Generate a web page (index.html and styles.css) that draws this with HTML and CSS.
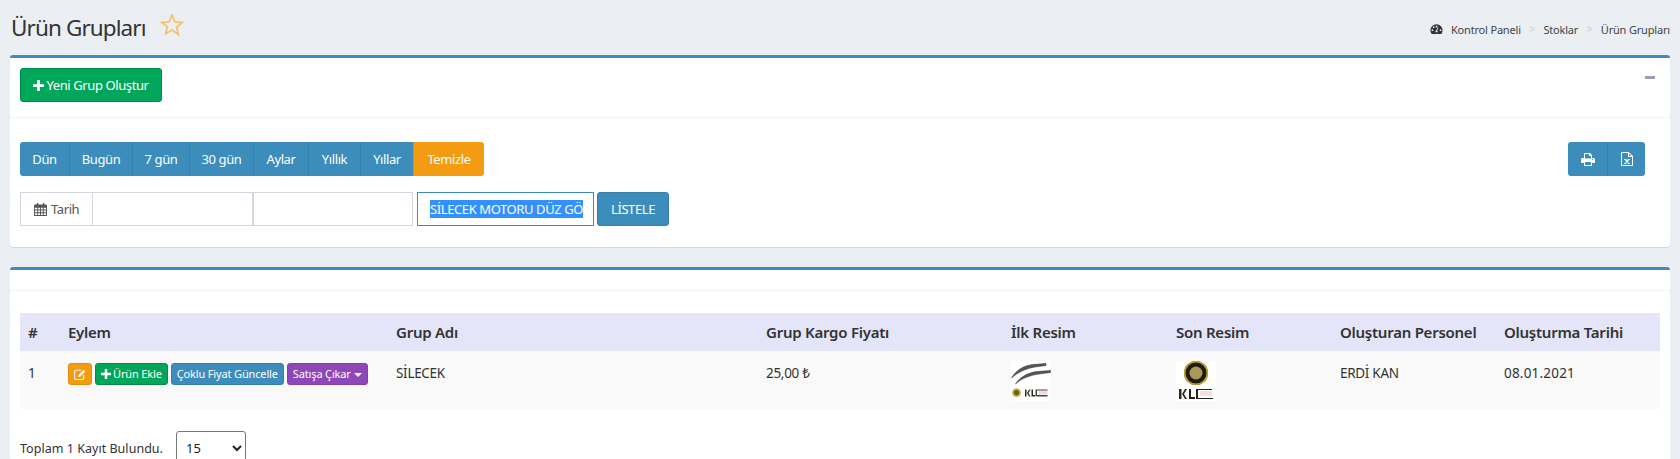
FILE: index.html
```html
<!DOCTYPE html>
<html lang="tr">
<head>
<meta charset="utf-8">
<title>Ürün Grupları</title>
<link rel="stylesheet" href="styles.css">
</head>
<body>
<header class="page-head">
  <h1>Ürün Grupları</h1>
  <svg class="star" viewBox="0 0 24 24"><path d="M12 2.200l2.900 6.600 7.200.7-5.400 4.800 1.600 7.100L12 17l-6.300 3.700 1.600-7.100L1.900 9.500l7.200-.7z"/></svg>
  <nav class="crumbs">
    <svg class="ico-gauge" viewBox="0 0 16 14"><path fill-rule="evenodd" d="M8 1a7.500 7.500 0 0 0-7.500 7.500c0 1.500.4 2.900 1.200 4.100.1.200.3.400.6.400h11.400c.3 0 .5-.2.600-.4.800-1.200 1.200-2.600 1.200-4.100A7.500 7.500 0 0 0 8 1zM3 9.500a1.100 1.100 0 1 1 0-2.200 1.100 1.100 0 0 1 0 2.200zm1.500-3.600a1.100 1.100 0 1 1 0-2.200 1.100 1.100 0 0 1 0 2.200zM8 5a1.100 1.100 0 1 1 0-2.200A1.100 1.100 0 0 1 8 5zm1.300 6H6.700c-.3-1.300.4-2 1-2.300l1.700-4 1 .4-1.600 4c.5.400.8 1.100.5 1.900zm3.700-1.500a1.100 1.100 0 1 1 0-2.200 1.100 1.100 0 0 1 0 2.200z"/></svg>
    <span class="crumb first">Kontrol Paneli</span><span class="sep">&gt;</span><span class="crumb">Stoklar</span><span class="sep">&gt;</span><span class="crumb">Ürün Grupları</span>
  </nav>
</header>

<section class="box box-filter">
  <div class="box-head">
    <button class="btn btn-green btn-new"><svg class="ico-plus" viewBox="0 0 12 12"><path d="M4.500 0h3v4.500H12v3H7.500V12h-3V7.500H0v-3h4.500z"/></svg>Yeni Grup Oluştur</button>
    <span class="collapse"></span>
  </div>
  <div class="box-body">
    <div class="toolbar">
      <div class="btn-group periods">
        <button class="seg">Dün</button><button class="seg">Bugün</button><button class="seg">7 gün</button><button class="seg">30 gün</button><button class="seg">Aylar</button><button class="seg">Yıllık</button><button class="seg">Yıllar</button><button class="seg seg-clear">Temizle</button>
      </div>
      <div class="btn-group export">
        <button class="seg seg-icon"><svg class="ico-print" viewBox="0 0 14 13"><path fill-rule="evenodd" d="M3 0h6l2 2v3h1.500c.8 0 1.500.7 1.500 1.500V10h-3v3H3v-3H0V6.500C0 5.700.7 5 1.500 5H3zm1 1v4.500h6V3H8.500C8.200 3 8 2.800 8 2.500V1zM4 9v3h6V9zm7.500-3a.6.600 0 1 0 0 1.200.6.600 0 0 0 0-1.200z"/></svg></button><button class="seg seg-icon"><svg class="ico-xls" viewBox="0 0 12 14"><path fill-rule="evenodd" d="M1 0h6.500L12 4v9c0 .6-.4 1-1 1H1c-.6 0-1-.4-1-1V1c0-.6.4-1 1-1zm0 1v12h10V5H7V1zm7 .4V4h2.300zM3 7h2.200l.8 1.400L6.800 7H9v.8h-.8L6.900 9.700l1.300 1.500H9v.8H6.700v-.8h.4L6 9.900l-1.100 1.300h.4v.8H3v-.8h.8l1.300-1.500-1.300-1.900H3z"/></svg></button>
      </div>
    </div>
    <div class="filter-row">
      <span class="addon"><svg class="ico-cal" viewBox="0 0 14 14"><path fill-rule="evenodd" d="M3 0h1.500v1.500h5V0H11v1.500h1.700c.7 0 1.300.6 1.300 1.300V14H0V2.800c0-.7.600-1.300 1.300-1.300H3zM1 5v2h2.500V5zm3.500 0v2h2V5zm3 0v2h2V5zm3 0v2H13V5zM1 8v2h2.500V8zm3.500 0v2h2V8zm3 0v2h2V8zm3 0v2H13V8zM1 11v2h2.500v-2zm3.500 0v2h2v-2zm3 0v2h2v-2zm3 0v2H13v-2z"/></svg>Tarih</span>
      <span class="date-input"></span>
      <span class="date-input"></span>
      <span class="search-input"><span class="selected">SİLECEK MOTORU DÜZ GÖ</span></span>
      <button class="btn btn-blue btn-list">LİSTELE</button>
    </div>
  </div>
</section>

<section class="box box-table">
  <div class="box-head-empty"></div>
  <div class="box-body-table">
    <table>
      <colgroup>
        <col class="c1"><col class="c2"><col class="c3"><col class="c4"><col class="c5"><col class="c6"><col class="c7"><col class="c8">
      </colgroup>
      <thead>
        <tr><th>#</th><th>Eylem</th><th>Grup Adı</th><th>Grup Kargo Fiyatı</th><th>İlk Resim</th><th>Son Resim</th><th>Oluşturan Personel</th><th>Oluşturma Tarihi</th></tr>
      </thead>
      <tbody>
        <tr>
          <td>1</td>
          <td class="actions">
            <button class="mini btn-orange"><svg class="ico-edit" viewBox="0 0 14 13"><path fill-rule="evenodd" d="M2.300 1H9l-1.200 1.200H2.300c-.6 0-1.100.5-1.100 1.100v7.400c0 .6.500 1.100 1.100 1.100h7.400c.6 0 1.100-.5 1.100-1.100V7.500L12 6.300v4.400c0 1.300-1 2.300-2.300 2.300H2.300C1 13 0 12 0 10.700V3.300C0 2 1 1 2.300 1zM11.400 1l1.900 1.900L7.500 8.800l-2.400.6.500-2.500z"/></svg></button>
            <button class="mini btn-green"><svg class="ico-plus small" viewBox="0 0 12 12"><path d="M4.500 0h3v4.500H12v3H7.500V12h-3V7.500H0v-3h4.500z"/></svg>Ürün Ekle</button>
            <button class="mini btn-blue">Çoklu Fiyat Güncelle</button>
            <button class="mini btn-purple">Satışa Çıkar<i class="caret"></i></button>
          </td>
          <td>SİLECEK</td>
          <td>25,00 ₺</td>
          <td class="thumb-cell">
            <svg class="thumb" viewBox="0 0 40 40">
              <rect width="40" height="40" fill="#fff"/>
              <path d="M.5 17C5 9 13 4.500 22 3.500L35 2.500V4.500L24 6C15 7.500 7 11 .5 17z" fill="#55555c" stroke="#333" stroke-width=".5"/>
              <path d="M4.500 23C9 16 17 11.500 26 10.500L39.500 9.500V11.500L28 13C19 14.500 11 17 4.500 23z" fill="#55555c" stroke="#333" stroke-width=".5"/>
              <circle cx="5.500" cy="31.700" r="3.500" fill="#6b6020" stroke="#c9b040" stroke-width="1.800"/>
              <path d="M14 28.500h1.500v7H14zM16 32l2-3.500h1.500l-2 3.500 2 3.500H18zM20.500 28.500H22v5.500h2v1.500h-3.500z" fill="#2c2a14"/>
              <path d="M24.500 28.500h12v1H26v4.500h10.500v1.500h-12z" fill="#444"/>
              <rect x="27.500" y="30" width="9" height="3.500" fill="#f3d9d9"/>
            </svg>
          </td>
          <td class="thumb-cell">
            <svg class="thumb" viewBox="0 0 40 40">
              <rect width="40" height="40" fill="#fff"/>
              <circle cx="20" cy="12" r="12" fill="#1d1b10"/>
              <circle cx="20" cy="12" r="11.300" fill="none" stroke="#c6a72a" stroke-width="1.500"/>
              <circle cx="20" cy="12" r="6.500" fill="#a8985a"/>
              <path d="M3 28h2.500v10H3zM6 33l3-5h2l-3 5 3 5H9z" fill="#2a2a1a"/>
              <path d="M13 28h2v8h4v2h-6zM20 28h16v1H22v8h15v1H20z" fill="#222"/>
              <rect x="24" y="30" width="12" height="5" fill="#f5dede"/>
            </svg>
          </td>
          <td>ERDİ KAN</td>
          <td class="date-cell">08.01.2021</td>
        </tr>
      </tbody>
    </table>
    <div class="table-foot">
      <span class="total">Toplam 1 Kayıt Bulundu.</span>
      <select class="page-size"><option>15</option></select>
    </div>
  </div>
</section>
</body>
</html>
```
FILE: styles.css
```css
html, body {
  height: 459px;
  overflow: hidden;
}
body {
  margin: 0;
  padding: 0 10px;
  background: #ebeef3;
  font-family: "Noto Sans", "Open Sans", sans-serif;
  font-size: 13px;
  letter-spacing: -0.4px;
  color: #333;
}
button {
  font: inherit;
  letter-spacing: inherit;
  border: 1px solid transparent;
  color: #fff;
  cursor: pointer;
}
.page-head {
  height: 55px;
  display: flex;
  align-items: flex-start;
  position: relative;
}
h1 {
  margin: 14px 0 0 1px;
  font-size: 22.500px;
  line-height: 27px;
  font-weight: 400;
  letter-spacing: -0.9px;
  color: #333;
}
.star {
  width: 24px;
  height: 24px;
  margin: 13px 0 0 14px;
  fill: none;
  stroke: #f4c26a;
  stroke-width: 1.800;
}
.crumbs {
  margin-left: auto;
  margin-top: 22px;
  display: flex;
  align-items: center;
  height: 14px;
  font-size: 11px;
  letter-spacing: -0.18px;
  color: #444;
}
.ico-gauge {
  width: 13px;
  height: 12px;
  fill: #333;
  margin-right: 8px;
}
.sep {
  color: #ccc;
  margin: 0 8.500px;
  font-size: 10px;
}
.box {
  background: #fff;
  border-top: 3px solid #3c8dbc;
  border-radius: 3px;
  box-shadow: 0 1px 1px rgba(0, 0, 0, 0.1);
}
.box-filter {
  height: 189px;
  margin-bottom: 20px;
}
.box-head {
  height: 60px;
  box-sizing: border-box;
  border-bottom: 1px solid #f1f1f1;
  padding: 10px 10px 0;
  display: flex;
  justify-content: space-between;
  align-items: flex-start;
}
.btn {
  border-radius: 3px;
}
.btn-green {
  background: #00a65a;
  border-color: #008d4c;
}
.btn-blue {
  background: #3c8dbc;
  border-color: #367fa9;
}
.btn-orange {
  background: #f39c12;
  border-color: #e08e0b;
}
.btn-purple {
  background: #8e47b8;
  border-color: #8340ab;
}
.btn-new {
  height: 34px;
  width: 142px;
  padding: 0;
  display: flex;
  align-items: center;
  justify-content: center;
  gap: 2px;
}
.ico-plus {
  width: 11px;
  height: 11px;
  fill: #fff;
}
.ico-plus.small {
  width: 10px;
  height: 10px;
  margin-right: 2px;
  vertical-align: -1px;
}
.collapse {
  width: 10px;
  height: 3px;
  background: #97a0b3;
  margin: 8px 5px 0 0;
}
.box-body {
  padding: 24px 10px 0;
}
.toolbar {
  display: flex;
  justify-content: space-between;
  padding-right: 15px;
}
.btn-group {
  display: flex;
  height: 34px;
}
.periods {
  display: grid;
  grid-template-columns: 49px 63px 57px 64px 55px 52px 53px 71px;
}
.seg {
  background: #3c8dbc;
  border: 0;
  border-left: 1px solid #367fa9;
  padding: 0;
  height: 34px;
}
.seg:first-child {
  border-left: 0;
  border-radius: 3px 0 0 3px;
}
.seg:last-child {
  border-radius: 0 3px 3px 0;
}
.seg-clear {
  background: #f39c12;
  border-left-color: #e08e0b;
}
.seg-icon {
  width: 39px;
  display: flex;
  align-items: center;
  justify-content: center;
}
.seg-icon:last-child {
  width: 38px;
}
.ico-print {
  width: 14px;
  height: 13px;
  fill: #fff;
}
.ico-xls {
  width: 12px;
  height: 14px;
  fill: #fff;
}
.filter-row {
  display: flex;
  margin-top: 16px;
  height: 34px;
}
.addon {
  box-sizing: border-box;
  width: 73px;
  border: 1px solid #d2d6de;
  display: flex;
  align-items: center;
  padding-left: 13px;
  color: #555;
}
.ico-cal {
  width: 13px;
  height: 13px;
  fill: #555;
  margin-right: 4px;
}
.date-input {
  box-sizing: border-box;
  width: 160px;
  border: 1px solid #d2d6de;
  border-left: 0;
}
.date-input + .date-input {
  width: 160px;
  border-left: 1px solid #d2d6de;
}
.search-input {
  box-sizing: border-box;
  width: 177px;
  margin-left: 4px;
  border: 1px solid #3c8dbc;
  display: flex;
  align-items: center;
  padding-left: 12px;
  white-space: nowrap;
  overflow: hidden;
}
.selected {
  background: #3390ff;
  color: #fff;
  line-height: 18px;
  font-size: 13px;
}
.btn-list {
  width: 72px;
  margin-left: 3px;
  padding: 0;
}
.box-table {
  height: 300px;
}
.box-head-empty {
  height: 20px;
  border-bottom: 1px solid #f1f1f1;
}
.box-body-table {
  padding: 22px 10px 0;
}
table {
  width: 1640px;
  table-layout: fixed;
  border-collapse: collapse;
}
.c1 { width: 40px; }
.c2 { width: 328px; }
.c3 { width: 370px; }
.c4 { width: 245px; }
.c5 { width: 165px; }
.c6 { width: 164px; }
.c7 { width: 164px; }
.c8 { width: 164px; }
th {
  background: #e4e5f8;
  height: 38px;
  padding: 0 8px;
  text-align: left;
  font-weight: 600;
  font-size: 15px;
  letter-spacing: -0.25px;
  color: #333;
  white-space: nowrap;
}
td {
  background: #f9f9f9;
  height: 58px;
  padding: 12px 8px 0;
  box-sizing: border-box;
  vertical-align: top;
  font-size: 13.500px;
  line-height: 20px;
  letter-spacing: -0.3px;
  white-space: nowrap;
}
td.date-cell {
  letter-spacing: 0.2px;
}
td.thumb-cell {
  padding-top: 10px;
}
td.actions {
  padding-top: 12px;
  font-size: 0;
}
.mini {
  height: 22px;
  padding: 0 5px;
  margin-right: 3px;
  border-radius: 3px;
  font-size: 11px;
  line-height: 20px;
  letter-spacing: -0.15px;
  vertical-align: top;
}
.ico-edit {
  width: 12px;
  height: 11px;
  fill: #fff;
  display: block;
  margin: 0 auto;
}
.btn-orange {
  width: 24px;
  padding: 0;
}
.caret {
  display: inline-block;
  margin-left: 3px;
  vertical-align: middle;
  border-top: 4px solid #fff;
  border-left: 4px solid transparent;
  border-right: 4px solid transparent;
}
.thumb {
  display: block;
  width: 40px;
  height: 40px;
  filter: blur(0.4px);
}
.table-foot {
  display: flex;
  align-items: center;
  margin-top: 22px;
}
.total {
  font-size: 12.500px;
  letter-spacing: 0.03px;
  color: #333;
}
.page-size {
  margin-left: 13px;
  width: 70px;
  height: 34px;
  padding-left: 5px;
  background: #fff;
  border: 1px solid #767676;
  border-radius: 3px;
  font: inherit;
  color: #222;
}
```
